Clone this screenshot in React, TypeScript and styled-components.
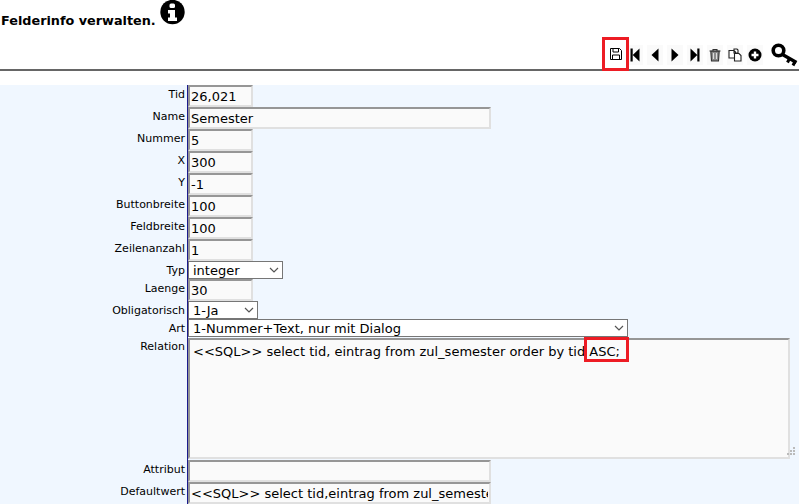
import React from 'react';
import styled, { createGlobalStyle } from 'styled-components';

const GlobalStyle = createGlobalStyle`
  html, body {
    margin: 0;
    padding: 0;
    height: 100%;
    overflow: hidden;
    background: #fff;
    font-family: "DejaVu Sans", Verdana, sans-serif;
  }
`;

const CHEVRON = `url("data:image/svg+xml,%3Csvg xmlns='http://www.w3.org/2000/svg' width='10' height='6'%3E%3Cpath d='M1 1l4 4 4-4' fill='none' stroke='%23555' stroke-width='1.2'/%3E%3C/svg%3E")`;

const Page = styled.div`
  width: 799px;
  height: 504px;
  overflow: hidden;
  display: flex;
  flex-direction: column;
`;

const TitleBar = styled.div`
  height: 37px;
  display: flex;
  align-items: flex-start;
  padding-left: 1px;
`;

const Title = styled.h1`
  margin: 13px 4px 0 0;
  font-size: 12.8px;
  line-height: 15px;
  font-weight: bold;
  color: #000;
`;

const Toolbar = styled.div`
  height: 32px;
  display: flex;
  justify-content: flex-end;
  align-items: flex-start;
  border-bottom: 2px solid #666;
`;

const SaveButton = styled.div`
  position: relative;
  z-index: 1;
  width: 21px;
  height: 28px;
  border: 3px solid #ed1c24;
  display: flex;
  align-items: center;
  justify-content: center;
  margin-right: -2px;
`;

const ToolButton = styled.div`
  width: 16px;
  height: 20px;
  margin: 8px 4px 0 0;
  background: #fafafa;
  display: flex;
  align-items: center;
  justify-content: center;
`;

const KeyBox = styled.div`
  width: 28px;
  height: 24px;
  margin: 6px 0 0 4px;
`;

const Panel = styled.div`
  margin-top: 14px;
  flex: 1;
  background: #f0f7ff;
`;

const Row = styled.div<{ $h: number }>`
  height: ${(p) => p.$h}px;
  display: grid;
  grid-template-columns: 188px 1fr;
`;

const Label = styled.label<{ $top?: number }>`
  font-size: 11px;
  line-height: 14px;
  color: #000;
  text-align: right;
  padding: ${(p) => p.$top ?? 3}px 2px 0 0;
  border-right: 1px solid #1a1a8c;
`;

const Field = styled.input<{ $w: number }>`
  box-sizing: border-box;
  width: ${(p) => p.$w}px;
  height: 22px;
  margin: 0;
  padding: 1px 1px 0 1px;
  border: 2px solid;
  border-color: #969696 #e0e0e0 #e0e0e0 #969696;
  background: #fafafa;
  font: 13px "DejaVu Sans", Verdana, sans-serif;
  color: #000;
  outline: none;
  border-radius: 0;
`;

const Choice = styled.select<{ $w: number }>`
  appearance: none;
  box-sizing: border-box;
  width: ${(p) => p.$w}px;
  height: 18px;
  margin: 0;
  padding: 0 0 0 4px;
  border: 1px solid #767676;
  border-radius: 0;
  background: #fff ${CHEVRON} no-repeat right 3px center;
  font: 13px "DejaVu Sans", Verdana, sans-serif;
  color: #000;
  outline: none;
`;

const AreaWrap = styled.div`
  position: relative;
  height: 121px;
`;

const Area = styled.textarea`
  box-sizing: border-box;
  display: block;
  width: 602px;
  height: 121px;
  margin: 0;
  padding: 4px 3px;
  border: 2px solid;
  border-color: #969696 #e0e0e0 #e0e0e0 #969696;
  background: #fafafa;
  font: 13px "DejaVu Sans", Verdana, sans-serif;
  line-height: 16px;
  color: #000;
  outline: none;
  resize: none;
`;

const Highlight = styled.div`
  position: absolute;
  left: 396px;
  top: -1px;
  width: 39px;
  height: 19px;
  border: 3px solid #ed1c24;
  pointer-events: none;
`;

const Grip = styled.svg`
  position: absolute;
  right: 4px;
  bottom: 4px;
`;

const ICON = { width: 14, height: 14, viewBox: '0 0 14 14' };

const InfoIcon = () => (
  <svg width="25" height="25" viewBox="0 0 25 25">
    <circle cx="12.5" cy="12" r="12.2" fill="#000" />
    <rect x="9.5" y="3.5" width="5.5" height="4.5" rx="1.5" fill="#fff" />
    <path d="M8 10h7v7.5h2V21H8v-3.5h2V13.5H8z" fill="#fff" />
  </svg>
);

const SaveIcon = () => (
  <svg width="14" height="14" viewBox="0 0 14 14" fill="none" stroke="#000">
    <path d="M1.5 1.5h9l2 2v9h-11z" />
    <path d="M4 1.5v3.5h5.5v-3.5" />
    <path d="M3.5 12.5v-4.5h7v4.5" />
  </svg>
);

const FirstIcon = () => (
  <svg {...ICON}><path d="M2.5 .5h2.2v13H2.5zM11.5 .5v13L4.7 7z" fill="#000" /></svg>
);
const PrevIcon = () => (
  <svg {...ICON}><path d="M10.5 .5v13L3.5 7z" fill="#000" /></svg>
);
const NextIcon = () => (
  <svg {...ICON}><path d="M3.5 .5v13l7-6.5z" fill="#000" /></svg>
);
const LastIcon = () => (
  <svg {...ICON}><path d="M2.5 .5v13l6.8-6.5zM9.3 .5h2.2v13H9.3z" fill="#000" /></svg>
);
const TrashIcon = () => (
  <svg {...ICON} fill="none" stroke="#333" strokeWidth="1.1">
    <path d="M1.5 3h11M5 3V1.5h4V3" />
    <path d="M2.8 3.2h8.4L10.5 13h-7z" fill="#888" />
    <path d="M5.5 5v6M8.5 5v6" stroke="#ddd" />
  </svg>
);
const CopyIcon = () => (
  <svg {...ICON} fill="#fff" stroke="#222" strokeWidth="1.1">
    <path d="M6 1h3l1 1v3H6zM1 2.5h5L7.5 4v6H1z" />
    <path d="M6.5 5.5H11l2 2V13H6.500z" />
  </svg>
);
const PlusIcon = () => (
  <svg {...ICON}>
    <circle cx="7" cy="7" r="6.5" fill="#000" />
    <path d="M3.5 5.8h2.300V3.500h2.400v2.300h2.300v2.400H8.200v2.300H5.800V8.200H3.500z" fill="#fff" />
  </svg>
);
const KeyIcon = () => (
  <svg width="28" height="24" viewBox="0 0 28 24" fill="none" stroke="#000">
    <circle cx="7.5" cy="7.5" r="5.3" strokeWidth="3.6" />
    <path d="M11.5 11.5l14 8" strokeWidth="3.4" />
    <path d="M18.5 15.5l-2 4M24 18.5l-2 4" strokeWidth="3" />
  </svg>
);

const tools = [FirstIcon, PrevIcon, NextIcon, LastIcon, TrashIcon, CopyIcon, PlusIcon];

const plainFields: [string, string, number][] = [
  ['Tid', '26,021', 65],
  ['Name', 'Semester', 303],
  ['Nummer', '5', 65],
  ['X', '300', 65],
  ['Y', '-1', 65],
  ['Buttonbreite', '100', 65],
  ['Feldbreite', '100', 65],
  ['Zeilenanzahl', '1', 65],
];

const RELATION = '<<SQL>> select tid, eintrag from zul_semester order by tid ASC;';
const DEFAULT_VALUE = '<<SQL>> select tid,eintrag from zul_semester order by tid';

export default function App() {
  return (
    <Page>
      <GlobalStyle />
      <TitleBar>
        <Title>Felderinfo verwalten.</Title>
        <InfoIcon />
      </TitleBar>
      <Toolbar>
        <SaveButton><SaveIcon /></SaveButton>
        {tools.map((Icon, i) => (
          <ToolButton key={i}><Icon /></ToolButton>
        ))}
        <KeyBox><KeyIcon /></KeyBox>
      </Toolbar>
      <Panel>
        {plainFields.map(([label, value, w]) => (
          <Row $h={22} key={label}>
            <Label>{label}</Label>
            <Field $w={w} defaultValue={value} />
          </Row>
        ))}
        <Row $h={18}>
          <Label>Typ</Label>
          <Choice $w={95} defaultValue="integer"><option>integer</option></Choice>
        </Row>
        <Row $h={22}>
          <Label>Laenge</Label>
          <Field $w={65} defaultValue="30" />
        </Row>
        <Row $h={18}>
          <Label>Obligatorisch</Label>
          <Choice $w={70} defaultValue="1-Ja"><option>1-Ja</option></Choice>
        </Row>
        <Row $h={19}>
          <Label>Art</Label>
          <Choice $w={440} defaultValue="a"><option value="a">1-Nummer+Text, nur mit Dialog</option></Choice>
        </Row>
        <Row $h={122}>
          <Label $top={2}>Relation</Label>
          <AreaWrap>
            <Area defaultValue={RELATION} />
            <Highlight />
            <Grip width="8" height="8" viewBox="0 0 8 8" fill="#bbb">
              <path d="M6 0h2v2H6zM3 3h2v2H3zM6 3h2v2H6zM0 6h2v2H0zM3 6h2v2H3zM6 6h2v2H6z" />
            </Grip>
          </AreaWrap>
        </Row>
        <Row $h={22}>
          <Label>Attribut</Label>
          <Field $w={303} defaultValue="" />
        </Row>
        <Row $h={22}>
          <Label>Defaultwert</Label>
          <Field $w={303} defaultValue={DEFAULT_VALUE} />
        </Row>
      </Panel>
    </Page>
  );
}
